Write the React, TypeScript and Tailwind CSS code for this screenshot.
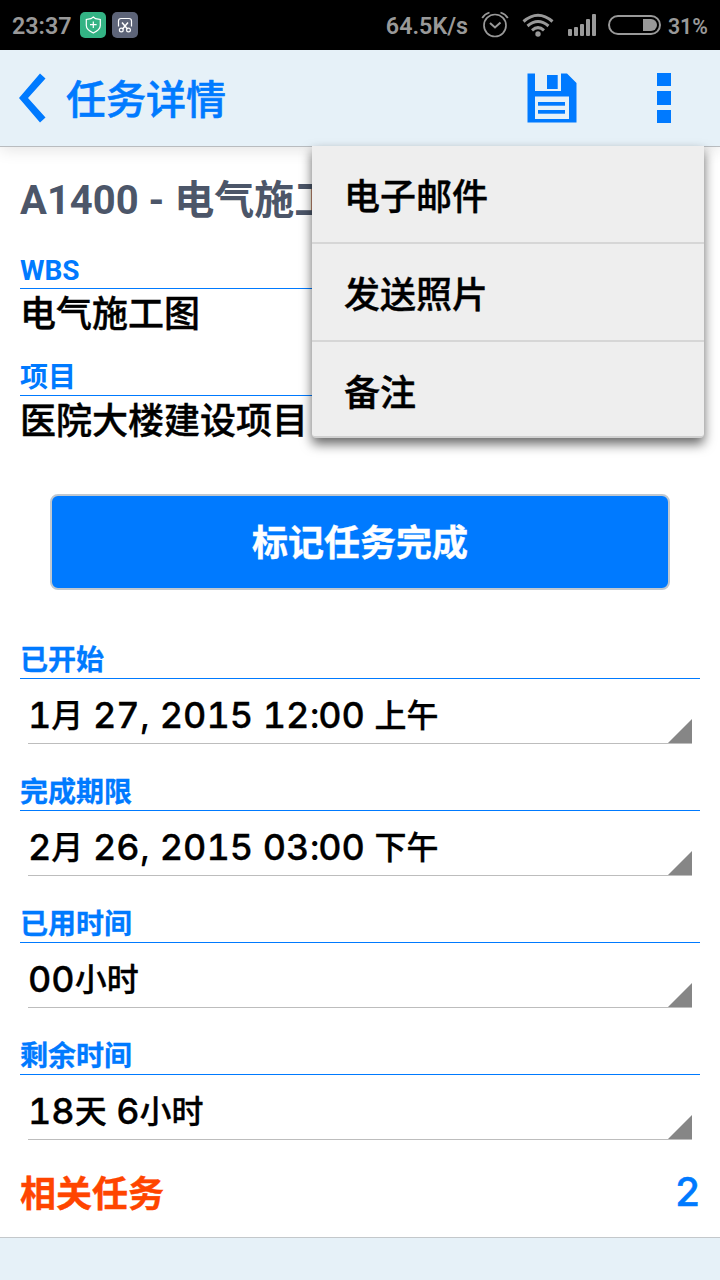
import { useState } from 'react';

type Field = {
  label: string;
  value: string;
};

const menuItems = ['电子邮件', '发送照片', '备注'];

const fields: Field[] = [
  { label: '已开始', value: '1月 27, 2015 12:00 上午' },
  { label: '完成期限', value: '2月 26, 2015 03:00 下午' },
  { label: '已用时间', value: '00小时' },
  { label: '剩余时间', value: '18天 6小时' }
];

function StatusBar() {
  return (
    <div className="flex h-[50px] items-center bg-black pl-3 pr-3 text-[23.300px] font-semibold text-[#999999]">
      <span className="w-[68px] pt-[3px]">23:37</span>
      <svg className="h-[26px] w-[58px]" viewBox="0 0 58 26" fill="none">
        <rect width="26" height="26" rx="5" fill="#33b384" />
        <path d="M13.300 5 L15.500 6.700 L20.300 7.400 V13.500 C20.300 17 17.500 19 13.300 21 C9 19 6.300 17 6.300 13.500 V7.400 L11 6.700 Z" stroke="#fff" strokeWidth="1.2" />
        <path d="M13.300 9.500 V16 M10 12.700 H16.600" stroke="#fff" strokeWidth="1.2" />
        <rect x="32" width="26" height="26" rx="5" fill="#5d6478" />
        <path d="M38.500 14.500 V9 Q38.500 6.500 41 6.500 H49 Q51.500 6.500 51.500 9 V14.500" stroke="#fff" strokeWidth="1.2" />
        <path d="M42 10.500 L47.500 17 M48 10.500 L42.500 17" stroke="#fff" strokeWidth="1.5" />
        <circle cx="41.300" cy="18" r="1.900" stroke="#fff" strokeWidth="1.200" />
        <circle cx="48.500" cy="18" r="1.900" stroke="#fff" strokeWidth="1.200" />
      </svg>
      <span className="ml-auto pt-[3px]">64.5K/s</span>
      <svg className="ml-[13px] h-7 w-[28px]" viewBox="0 0 28 28" fill="none" stroke="#999999">
        <circle cx="14" cy="14.500" r="11" strokeWidth="1.700" />
        <path d="M9 12 L14 16.500 L19.500 11.500" strokeWidth="2" />
        <path d="M1.200 7 Q3.500 3 8.500 1.500 M26.800 7 Q24.500 3 19.500 1.500" strokeWidth="1.800" />
      </svg>
      <svg className="mb-px ml-[13px] h-6 w-8" viewBox="0 0 32 24" fill="none" stroke="#999999" strokeWidth="3">
        <path d="M1.500 8.500 Q16 -4 30.500 8.500" />
        <path d="M5.500 13 Q16 4 26.500 13" />
        <path d="M10 17.300 Q16 12 22 17.300" />
        <circle cx="16" cy="21" r="2.700" fill="#999999" stroke="none" />
      </svg>
      <svg className="ml-[14px] h-[22px] w-[28px]" viewBox="0 0 28 22" fill="#999999">
        <rect x="0" y="15" width="4" height="7" rx="1" />
        <rect x="6" y="13" width="4" height="9" rx="1" />
        <rect x="12" y="10" width="4" height="12" rx="1" />
        <rect x="18" y="5" width="4" height="17" rx="1" />
        <rect x="24" y="0" width="4" height="22" rx="1" />
      </svg>
      <svg className="ml-3 h-5 w-[53px]" viewBox="0 0 53 20" fill="none">
        <rect x="1" y="1" width="51" height="18" rx="9" stroke="#999999" strokeWidth="2" />
        <path d="M35 4 H43 A6 6 0 0 1 43 16 H35 Z" fill="#999999" />
      </svg>
      <span className="ml-[7px] w-[40px] pt-[3px] text-[21.200px]">31%</span>
    </div>
  );
}

function Header({ onToggle }: { onToggle: () => void }) {
  return (
    <header className="relative z-10 flex h-[97px] items-center border-b border-[#b9bcbf] bg-[#e6f1f8] pl-[18px] text-[#007aff] shadow-[0_2px_16px_rgba(0,0,0,0.12)]">
      <button aria-label="返回">
        <svg className="h-[52px] w-7" viewBox="0 0 28 52" fill="currentColor">
          <path d="M22 1.500 L27.500 6.500 L10 26 L27.500 45.500 L22 50.500 L1 26 Z" />
        </svg>
      </button>
      <h1 className="ml-5 pt-[6px] text-[40px] leading-none font-medium [-webkit-text-stroke:0.6px]">任务详情</h1>
      <button className="ml-auto" aria-label="保存">
        <svg className="h-[50px] w-[50px]" viewBox="0 0 50 50" fill="currentColor">
          <path
            fillRule="evenodd"
            d="M0.500 0.500 H8 V18 H34 V0.500 H40 L49.500 10 V49.500 H0.500 Z M8 23.500 V46 H42 V23.500 Z"
          />
          <rect x="20" y="2" width="10.700" height="14" />
          <rect x="11" y="29" width="27" height="3.700" />
          <rect x="11" y="37" width="27" height="3.700" />
        </svg>
      </button>
      <button className="mr-[49px] ml-20 flex flex-col gap-[5px]" aria-label="更多" onClick={onToggle}>
        <span className="h-[13.400px] w-[14px] bg-current" />
        <span className="h-[13.400px] w-[14px] bg-current" />
        <span className="h-[13.400px] w-[14px] bg-current" />
      </button>
    </header>
  );
}

function Menu() {
  return (
    <div className="absolute top-[146px] left-[312px] z-20 w-[392px] rounded-b border-b-2 border-[#d0d0d0] bg-[#eeeeee] shadow-[0_6px_12px_rgba(0,0,0,0.6)]">
      {menuItems.map((item) => (
        <button
          key={item}
          className="flex h-[98px] w-full items-center border-b-2 border-[#d6d6d6] pt-[7px] pl-8 text-4xl leading-none font-medium [-webkit-text-stroke:0.4px] last:h-[94px] last:border-b-0 last:pt-[9px]"
        >
          {item}
        </button>
      ))}
    </div>
  );
}

function InfoField({ label, value }: Field) {
  return (
    <div className="h-[107px]">
      <div className="flex h-[38px] items-center border-b border-[#007aff] pt-0.5 text-[28px] leading-none font-bold text-[#007aff]">
        {label}
      </div>
      <div className="flex h-[52px] items-center text-4xl leading-none font-medium [-webkit-text-stroke:0.4px]">
        {value}
      </div>
    </div>
  );
}

// digits are set wider than the characters around them
function MixedText({ text }: { text: string }) {
  return (
    <>
      {text.split(/([\u4e00-\u9fff]+|\d+)/).map((part, i) => {
        if (/\d/.test(part)) {
          return (
            <span
              key={i}
              className="font-[Inter,sans-serif] text-[36px] tabular-nums [-webkit-text-stroke:0.3px]"
            >
              {part}
            </span>
          );
        }
        if (i % 2) {
          return (
            <span key={i} className="align-[1px] text-[32px] [-webkit-text-stroke:0.3px]">
              {part}
            </span>
          );
        }
        return (
          <span
            key={i}
            className={`font-[Inter,sans-serif] text-[36px] whitespace-pre ${part === ':' ? 'tracking-[-2px]' : ''}`}
          >
            {part}
          </span>
        );
      })}
    </>
  );
}

function SelectField({ label, value }: Field) {
  return (
    <div>
      <div className="flex h-[67px] items-end border-b border-[#007aff] pb-[3px] text-[28px] leading-none font-bold text-[#007aff] [-webkit-text-stroke:0.3px]">
        {label}
      </div>
      <button className="mx-2 flex h-[65px] w-[664px] items-end border-b border-[#bdbdbd] text-left leading-none font-medium">
        <span className="flex-1 pb-[10px]">
          <MixedText text={value} />
        </span>
        <svg className="size-6" viewBox="0 0 24 24">
          <path d="M24 0 V24 H0 Z" fill="#868686" />
        </svg>
      </button>
    </div>
  );
}

export default function App() {
  const [menuOpen, setMenuOpen] = useState(true);

  return (
    <div className="relative flex h-[1280px] w-[720px] flex-col overflow-hidden bg-white font-[Roboto,'Noto_Sans_CJK_SC',sans-serif] text-black">
      <StatusBar />
      <Header onToggle={() => setMenuOpen(!menuOpen)} />
      {menuOpen && <Menu />}

      <main className="flex-1 px-5">
        <h2 className="flex h-[104px] items-center pt-[3px] text-[40px] leading-none font-bold whitespace-nowrap text-[#4c5669]">
          A1400 - 电气施工图
        </h2>
        <InfoField label="WBS" value="电气施工图" />
        <InfoField label="项目" value="医院大楼建设项目" />
        <button className="mx-[30px] mt-[29px] mb-[22px] flex h-24 w-[620px] items-center justify-center rounded-lg border-2 border-[#c0c8d0] bg-[#007aff] pt-[4px] text-4xl leading-none font-bold text-white [-webkit-text-stroke:0.4px]">
          标记任务完成
        </button>
        {fields.map((field) => (
          <SelectField key={field.label} {...field} />
        ))}
        <div className="flex h-[97px] items-center justify-between pt-3 text-4xl leading-none font-bold text-[#ff4500]">
          <span className="[-webkit-text-stroke:0.4px]">相关任务</span>
          <span className="pb-[5px] font-[Inter,sans-serif] text-[40px] font-medium text-[#007aff] [-webkit-text-stroke:0.5px]">
            2
          </span>
        </div>
      </main>

      <footer className="h-[43px] border-t border-[#c4c8cb] bg-[#e6f1f8]" />
    </div>
  );
}
